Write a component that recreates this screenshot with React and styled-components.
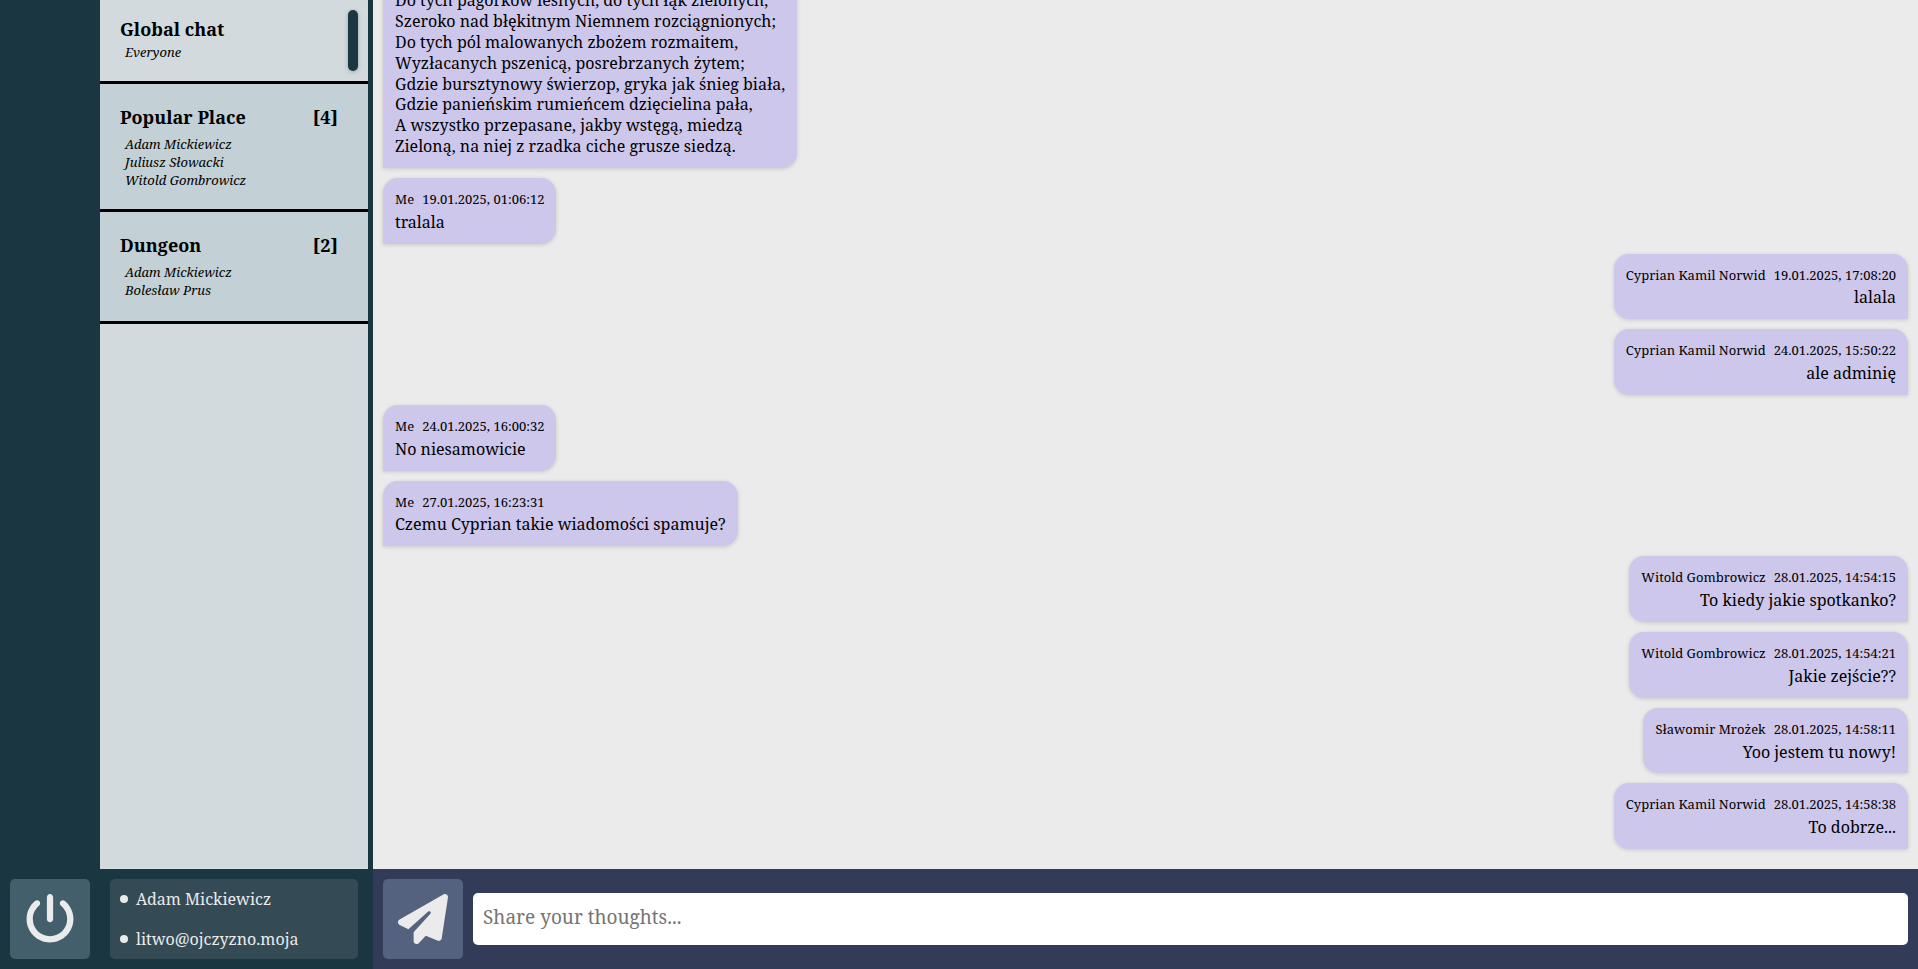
import React from "react";
import styled, { createGlobalStyle } from "styled-components";
import { FaPaperPlane, FaPowerOff } from "react-icons/fa6";

const GlobalStyle = createGlobalStyle`
  *, *::before, *::after { box-sizing: border-box; }
  body {
    margin: 0;
    color: #000;
    font-family: "Noto Serif", "Droid Serif", "Liberation Serif", serif;
    font-size: 16px;
    line-height: 1.3;
  }
  button, textarea { font: inherit; }
  ul, h2, p { margin: 0; padding: 0; }
  ul { list-style: none; }
`;

const Page = styled.div`
  display: grid;
  grid-template-columns: 373px minmax(0, 1fr);
  grid-template-rows: minmax(0, 1fr) 100px;
  height: 100vh;
  overflow: hidden;
  background: #1a3641;
`;

const Sidebar = styled.aside`
  margin: 0 5px 0 100px;
  background: #d2dadd;
  overflow: hidden;
`;

const Room = styled.li`
  display: flex;
  justify-content: space-between;
  min-height: ${({ $open }) => ($open ? "84px" : "112px")};
  padding: ${({ $open }) => ($open ? "17px 10px 10px 20px" : "21px 30px 20px 20px")};
  background: ${({ $open }) => ($open ? "#d2dadd" : "#c3d1d6")};
  border-bottom: 3px solid #000;
`;

const RoomTitle = styled.h2`
  font-size: 18px;
  line-height: 24px;
  font-weight: 700;
  margin-bottom: ${({ $open }) => ($open ? "2px" : "6px")};
`;

const RoomCount = styled.span`
  font-size: 18px;
  line-height: 24px;
  font-weight: 700;
`;

const Members = styled.ul`
  padding-left: 5px;
  font-size: 13px;
  line-height: 18px;
  font-style: italic;
`;

const OpenMarker = styled.span`
  align-self: flex-start;
  width: 10px;
  height: 61px;
  margin-top: -7px;
  border-radius: 5px;
  background: #1a3641;
  box-shadow: 0 1px 4px rgba(26, 54, 65, 0.3);
`;

const Messages = styled.main`
  display: flex;
  flex-direction: column;
  justify-content: flex-end;
  gap: 10px;
  padding: 10px 10px 20px;
  background: #ebebeb;
  overflow: hidden;
`;

const Bubble = styled.article`
  flex: none;
  align-self: ${({ $mine }) => ($mine ? "flex-start" : "flex-end")};
  text-align: ${({ $mine }) => ($mine ? "left" : "right")};
  padding: 13px 12px 11px;
  border-radius: ${({ $mine }) => ($mine ? "15px 15px 15px 0" : "15px 15px 0 15px")};
  background: #cdc7eb;
  box-shadow: 0 1px 4px rgba(0, 0, 0, 0.15);
`;

const Meta = styled.div`
  display: flex;
  gap: 8px;
  margin-bottom: 4px;
  font-size: 13px;
  justify-content: ${({ $mine }) => ($mine ? "flex-start" : "flex-end")};
`;

const MessageText = styled.p`
  white-space: pre-line;
`;

const AccountBar = styled.footer`
  display: flex;
  gap: 20px;
  padding: 10px 15px 10px 10px;
`;

const IconButton = styled.button`
  flex: none;
  display: flex;
  align-items: center;
  justify-content: center;
  width: 80px;
  height: 80px;
  padding: 0;
  border: 0;
  border-radius: 5px;
  color: #ebebeb;
  background: ${({ $tone }) => $tone};
`;

const Account = styled.ul`
  flex: 1;
  padding: 0 10px;
  border-radius: 5px;
  color: #ebebeb;
  background: #344b56;
`;

const AccountLine = styled.li`
  display: flex;
  align-items: center;
  gap: 8px;
  height: 40px;

  &::before {
    content: "";
    width: 8px;
    height: 8px;
    border-radius: 50%;
    background: #ebebeb;
  }
`;

const Composer = styled.form`
  display: flex;
  align-items: center;
  gap: 10px;
  padding: 10px;
  background: #323c58;
`;

const MessageInput = styled.textarea`
  flex: 1;
  min-width: 0;
  height: 52px;
  padding: 10px;
  border: 0;
  border-radius: 5px;
  background: #fff;
  font-size: 19px;
  line-height: 28px;
  resize: none;
  overflow: hidden;

  &::placeholder { color: #757575; }
`;

const rooms = [
  { name: "Global chat", members: ["Everyone"], open: true },
  { name: "Popular Place", count: 4, members: ["Adam Mickiewicz", "Juliusz Słowacki", "Witold Gombrowicz"] },
  { name: "Dungeon", count: 2, members: ["Adam Mickiewicz", "Bolesław Prus"] },
];

const poem = `Do tych pagórków leśnych, do tych łąk zielonych,
Szeroko nad błękitnym Niemnem rozciągnionych;
Do tych pól malowanych zbożem rozmaitem,
Wyzłacanych pszenicą, posrebrzanych żytem;
Gdzie bursztynowy świerzop, gryka jak śnieg biała,
Gdzie panieńskim rumieńcem dzięcielina pała,
A wszystko przepasane, jakby wstęgą, miedzą
Zieloną, na niej z rzadka ciche grusze siedzą.`;

const messages = [
  { author: "Me", text: poem },
  { author: "Me", time: "19.01.2025, 01:06:12", text: "tralala" },
  { author: "Cyprian Kamil Norwid", time: "19.01.2025, 17:08:20", text: "lalala" },
  { author: "Cyprian Kamil Norwid", time: "24.01.2025, 15:50:22", text: "ale adminię" },
  { author: "Me", time: "24.01.2025, 16:00:32", text: "No niesamowicie" },
  { author: "Me", time: "27.01.2025, 16:23:31", text: "Czemu Cyprian takie wiadomości spamuje?" },
  { author: "Witold Gombrowicz", time: "28.01.2025, 14:54:15", text: "To kiedy jakie spotkanko?" },
  { author: "Witold Gombrowicz", time: "28.01.2025, 14:54:21", text: "Jakie zejście??" },
  { author: "Sławomir Mrożek", time: "28.01.2025, 14:58:11", text: "Yoo jestem tu nowy!" },
  { author: "Cyprian Kamil Norwid", time: "28.01.2025, 14:58:38", text: "To dobrze..." },
];

export default function App() {
  return (
    <>
      <GlobalStyle />
      <Page>
        <Sidebar>
          <ul>
            {rooms.map((room) => (
              <Room key={room.name} $open={room.open}>
                <div>
                  <RoomTitle $open={room.open}>{room.name}</RoomTitle>
                  <Members>
                    {room.members.map((m) => <li key={m}>{m}</li>)}
                  </Members>
                </div>
                {room.open ? <OpenMarker /> : <RoomCount>[{room.count}]</RoomCount>}
              </Room>
            ))}
          </ul>
        </Sidebar>
        <Messages>
          {messages.map((m, i) => {
            const mine = m.author === "Me";
            return (
              <Bubble key={i} $mine={mine}>
                {m.time && (
                  <Meta $mine={mine}>
                    <span>{m.author}</span>
                    <time>{m.time}</time>
                  </Meta>
                )}
                <MessageText>{m.text}</MessageText>
              </Bubble>
            );
          })}
        </Messages>
        <AccountBar>
          <IconButton type="button" aria-label="Log out" $tone="#435f6b">
            <FaPowerOff size={50} />
          </IconButton>
          <Account>
            <AccountLine>Adam Mickiewicz</AccountLine>
            <AccountLine>litwo@ojczyzno.moja</AccountLine>
          </Account>
        </AccountBar>
        <Composer onSubmit={(e) => e.preventDefault()}>
          <IconButton type="submit" aria-label="Send" $tone="#546280">
            <FaPaperPlane size={50} />
          </IconButton>
          <MessageInput rows={1} aria-label="Message" placeholder="Share your thoughts..." />
        </Composer>
      </Page>
    </>
  );
}
